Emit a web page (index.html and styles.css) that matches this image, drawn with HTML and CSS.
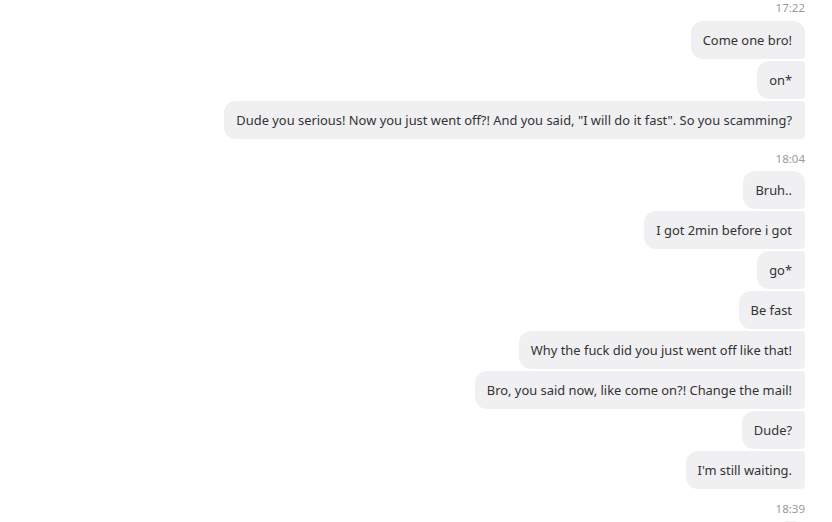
FILE: index.html
```
<!DOCTYPE html>
<html>
<head>
<meta charset="utf-8">
<link rel="stylesheet" href="styles.css">
</head>
<body>
<div class="chat">
  <div class="time first">17:22</div>
  <div class="msg"><span class="bubble top">Come one bro!</span></div>
  <div class="msg"><span class="bubble mid">on*</span></div>
  <div class="msg"><span class="bubble end">Dude you serious! Now you just went off?! And you said, "I will do it fast". So you scamming?</span></div>
  <div class="time">18:04</div>
  <div class="msg"><span class="bubble top">Bruh..</span></div>
  <div class="msg"><span class="bubble mid">I got 2min before i got</span></div>
  <div class="msg"><span class="bubble mid">go*</span></div>
  <div class="msg"><span class="bubble mid">Be fast</span></div>
  <div class="msg"><span class="bubble mid">Why the fuck did you just went off like that!</span></div>
  <div class="msg"><span class="bubble mid">Bro, you said now, like come on?! Change the mail!</span></div>
  <div class="msg"><span class="bubble mid">Dude?</span></div>
  <div class="msg"><span class="bubble end">I'm still waiting.</span></div>
  <div class="time">18:39</div>
  <div class="msg"><span class="bubble top">&nbsp;</span></div>
</div>
</body>
</html>
```
FILE: styles.css
```
html, body {
  margin: 0;
  padding: 0;
  background: #ffffff;
  overflow: hidden;
  height: 522px;
}
.chat {
  display: flex;
  flex-direction: column;
  padding: 0 27px 0 0;
  font-family: "Noto Sans", "Open Sans", sans-serif;
}
.time {
  text-align: right;
  font-size: 11.5px;
  line-height: 14px;
  color: #9a9a9a;
  padding: 11px 0 5px;
}
.time.first {
  padding-top: 1px;
  padding-bottom: 6px;
}
.msg {
  display: flex;
  justify-content: flex-end;
  margin-bottom: 2px;
}
.bubble {
  background: #f0f0f2;
  color: #333333;
  font-size: 12.9px;
  line-height: 18px;
  padding: 10px 13px 10px 12px;
  border-radius: 12px 4px 4px 12px;
  white-space: nowrap;
}
.bubble.top {
  border-radius: 12px 12px 4px 12px;
}
.bubble.end {
  border-radius: 12px 4px 4px 12px;
}
```
